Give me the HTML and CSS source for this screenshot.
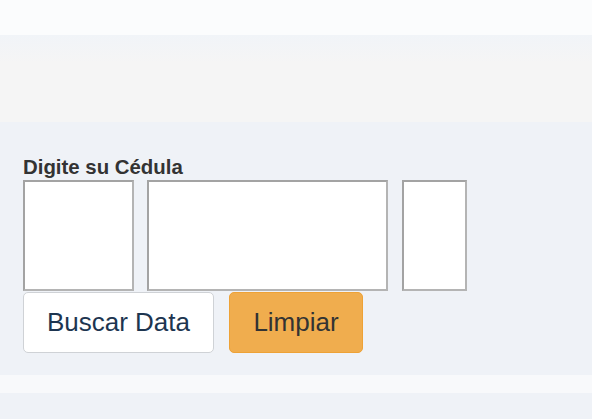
FILE: index.html
```html
<!DOCTYPE html>
<html lang="es">
<head>
<meta charset="utf-8">
<title>Digite su Cédula</title>
<link rel="stylesheet" href="styles.css">
</head>
<body>
<div class="topbar"></div>
<div class="hero"></div>
<section class="form-section">
  <label class="label" for="c1">Digite su Cédula</label>
  <div class="inputs">
    <input class="box box-a" id="c1" type="text">
    <input class="box box-b" type="text">
    <input class="box box-c" type="text">
  </div>
  <div class="buttons">
    <button class="btn btn-default" type="button">Buscar Data</button>
    <button class="btn btn-warning" type="button">Limpiar</button>
  </div>
</section>
<div class="strip"></div>
<div class="rest"></div>
</body>
</html>
```

FILE: styles.css
```css
html, body {
  margin: 0;
  padding: 0;
}
body {
  background: #eff2f7;
  font-family: "Liberation Sans", Arial, sans-serif;
  color: #333;
}
.topbar {
  height: 35px;
  background: #fbfcfd;
}
.hero {
  height: 87px;
  background: linear-gradient(#f1f4f8 0px, #f5f5f5 28px, #f5f5f5 100%);
}
.form-section {
  background: #eff2f7;
  padding: 33px 23px 22px;
  height: 198px;
}
.label {
  display: block;
  font-size: 20.4px;
  font-weight: bold;
  line-height: 25px;
  color: #333;
}
.inputs {
  display: flex;
  gap: 13px;
  height: 111px;
}
.box {
  box-sizing: border-box;
  height: 111px;
  margin: 0;
  padding: 0;
  background: #fff;
  border: 2px solid #a3a3a3;
  border-right-color: #b4b4b4;
  border-bottom-color: #b4b4b4;
  outline: none;
}
.box-a { width: 111px; }
.box-b { width: 241px; }
.box-c { width: 65px; margin-left: 1px; }
.buttons {
  display: flex;
  gap: 15px;
  margin-top: 1px;
}
.btn {
  box-sizing: border-box;
  height: 61px;
  padding: 0;
  font-family: "Liberation Sans", Arial, sans-serif;
  font-size: 26px;
  white-space: nowrap;
  text-align: center;
  border-radius: 5px;
  border: 1px solid #ccc;
  cursor: pointer;
}
.btn-default {
  width: 191px;
  background: #fff;
  color: #1d3550;
  border-color: #cfd2d6;
}
.btn-warning {
  width: 134px;
  background: #f0ad4e;
  border-color: #eea236;
  color: #333;
}
.strip {
  height: 18px;
  background: #f8f9fb;
}
.rest {
  height: 26px;
  background: #eff2f7;
}
```
